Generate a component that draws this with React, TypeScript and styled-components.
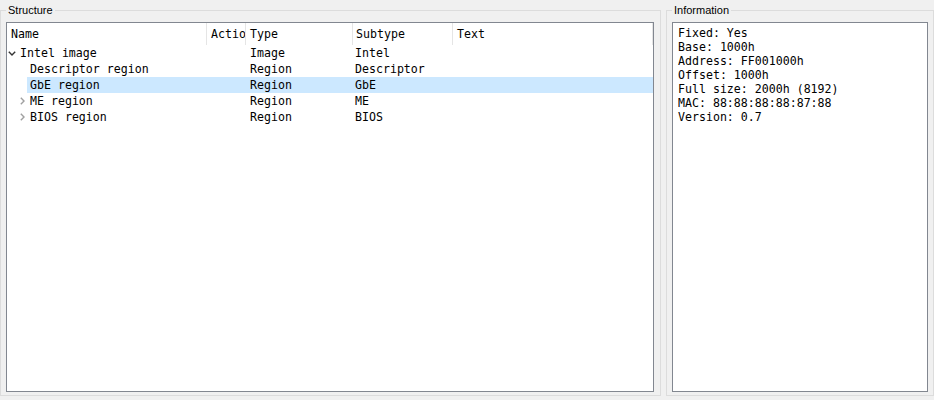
import styled, { createGlobalStyle } from "styled-components";

const GlobalStyle = createGlobalStyle`
    html, body {
        margin: 0;
        padding: 0;
        background: #f0f0f0;
    }
    body {
        width: 934px;
        height: 400px;
        overflow: hidden;
        font-family: "DejaVu Sans Mono", monospace;
    }
`;

type Item = {
    name: string;
    action?: string;
    type: string;
    subtype: string;
    text?: string;
    depth: number;
    branch?: "open" | "closed";
    selected?: boolean;
};

const items: Item[] = [
    { name: "Intel image", type: "Image", subtype: "Intel", depth: 0, branch: "open" },
    { name: "Descriptor region", type: "Region", subtype: "Descriptor", depth: 1 },
    { name: "GbE region", type: "Region", subtype: "GbE", depth: 1, selected: true },
    { name: "ME region", type: "Region", subtype: "ME", depth: 1, branch: "closed" },
    { name: "BIOS region", type: "Region", subtype: "BIOS", depth: 1, branch: "closed" },
];

const info = [
    "Fixed: Yes",
    "Base: 1000h",
    "Address: FF001000h",
    "Offset: 1000h",
    "Full size: 2000h (8192)",
    "MAC: 88:88:88:88:87:88",
    "Version: 0.7",
];

const NAME_W = 200;
const INDENT = 10;

function Chevron({ open }: { open: boolean }) {
    if (open) {
        return (
            <svg width="8" height="5" viewBox="0 0 8 5">
                <polyline points="0.8,0.8 4,4 7.2,0.8" fill="none" stroke="#333" strokeWidth="1.4" />
            </svg>
        );
    }
    return (
        <svg width="5" height="8" viewBox="0 0 5 8">
            <polyline points="0.8,0.8 4,4 0.8,7.2" fill="none" stroke="#a0a0a0" strokeWidth="1.4" />
        </svg>
    );
}

export default function App() {
    return (
        <>
            <GlobalStyle />
            <Window>
                <StructureGroup>
                    <Legend>Structure</Legend>
                    <Tree>
                        <Header>
                            <HeadCell $width={NAME_W}>Name</HeadCell>
                            <HeadCell $width={39}>Action</HeadCell>
                            <HeadCell $width={107}>Type</HeadCell>
                            <HeadCell $width={100} $pad={3}>Subtype</HeadCell>
                            <HeadCell $grow>Text</HeadCell>
                        </Header>
                        {items.map((it) => {
                            const branchW = INDENT * it.depth + INDENT;
                            return (
                                <Row key={it.name}>
                                    <Branch style={{ width: branchW }}>
                                        <ChevronSlot>
                                            {it.branch && <Chevron open={it.branch === "open"} />}
                                        </ChevronSlot>
                                    </Branch>
                                    <RowBody $selected={!!it.selected}>
                                        <NameCell style={{ width: NAME_W - branchW }}>{it.name}</NameCell>
                                        <Cell $width={39}>{it.action}</Cell>
                                        <Cell $width={107}>{it.type}</Cell>
                                        <Cell $width={100} $pad={2}>{it.subtype}</Cell>
                                        <Cell $grow>{it.text}</Cell>
                                    </RowBody>
                                </Row>
                            );
                        })}
                    </Tree>
                </StructureGroup>
                <InfoGroup>
                    <Legend>Information</Legend>
                    <InfoBox>
                        {info.map((line) => (
                            <InfoLine key={line}>{line}</InfoLine>
                        ))}
                    </InfoBox>
                </InfoGroup>
            </Window>
        </>
    );
}

const Window = styled.div`
    display: flex;
    gap: 5px;
    height: 396px;
    width: 934px;
`;

const Group = styled.fieldset`
    box-sizing: border-box;
    margin: 0;
    min-width: 0;
    border: 1px solid #dcdcdc;
    padding: 2px 6px 3px 5px;
    display: flex;
    flex-direction: column;
`;

const StructureGroup = styled(Group)`
    width: 661px;
`;

const InfoGroup = styled(Group)`
    width: 268px;
    padding-right: 5px;
`;

const Legend = styled.legend`
    padding: 0 2px;
    font-family: "Liberation Sans", Arial, sans-serif;
    font-size: 11px;
    line-height: 20px;
    color: #000;
`;

const Tree = styled.div`
    flex: 1;
    background: #fff;
    border: 1px solid #828790;
    overflow: hidden;
    font-size: 11.6px;
    color: #000;
`;

const Header = styled.div`
    display: flex;
    height: 22px;
`;

const HeadCell = styled.div<{ $width?: number; $grow?: boolean; $pad?: number }>`
    box-sizing: border-box;
    width: ${(p) => (p.$width ? `${p.$width}px` : "auto")};
    flex: ${(p) => (p.$grow ? "1" : "none")};
    border-right: 1px solid #e5e5e5;
    padding-left: ${(p) => p.$pad ?? 4}px;
    line-height: 22px;
    white-space: nowrap;
    overflow: hidden;
    text-overflow: clip;
`;

const Row = styled.div`
    display: flex;
    height: 16px;
    line-height: 16px;
`;

const Branch = styled.div`
    flex: none;
    display: flex;
    justify-content: flex-end;
`;

const ChevronSlot = styled.div`
    width: 10px;
    display: flex;
    align-items: center;
    justify-content: center;
`;

const RowBody = styled.div<{ $selected: boolean }>`
    flex: 1;
    display: flex;
    background: ${(p) => (p.$selected ? "#cce8ff" : "transparent")};
`;

const NameCell = styled.div`
    box-sizing: border-box;
    flex: none;
    padding-left: 3px;
    white-space: nowrap;
    overflow: hidden;
`;

const Cell = styled.div<{ $width?: number; $grow?: boolean; $pad?: number }>`
    box-sizing: border-box;
    width: ${(p) => (p.$width ? `${p.$width}px` : "auto")};
    flex: ${(p) => (p.$grow ? "1" : "none")};
    padding-left: ${(p) => p.$pad ?? 4}px;
    white-space: nowrap;
    overflow: hidden;
`;

const InfoBox = styled.div`
    flex: 1;
    background: #fff;
    border: 1px solid #828790;
    padding: 3px 5px;
    font-size: 11.6px;
    color: #000;
`;

const InfoLine = styled.div`
    line-height: 14px;
    white-space: pre;
`;
